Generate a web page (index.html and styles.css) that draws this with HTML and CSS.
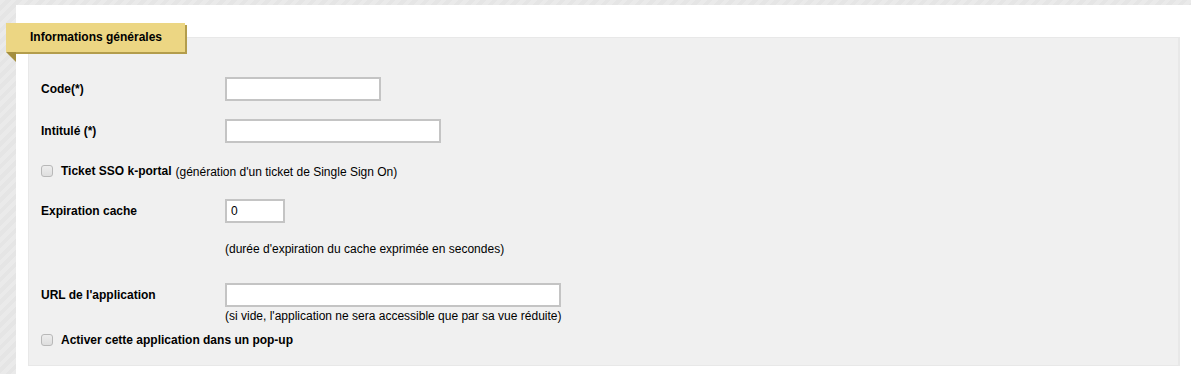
FILE: index.html
```html
<!DOCTYPE html>
<html lang="fr">
<head>
  <meta charset="UTF-8">
  <title>Application</title>
  <link rel="stylesheet" href="styles.css">
</head>
<body>

  <div class="panel">
    <div class="legend">Informations générales</div>

    <div class="fieldset">
      <div class="row row-code">
        <label class="label">Code(*)</label>
        <input type="text" class="field field-code">
      </div>

      <div class="row row-title">
        <label class="label">Intitulé (*)</label>
        <input type="text" class="field field-title">
      </div>

      <div class="check-row row-sso">
        <input type="checkbox" class="check">
        <span class="check-label">Ticket SSO k-portal</span>
        <span class="hint">(génération d'un ticket de Single Sign On)</span>
      </div>

      <div class="row row-cache">
        <label class="label">Expiration cache</label>
        <input type="text" class="field field-cache" value="0">
      </div>
      <div class="note note-cache">(durée d'expiration du cache exprimée en secondes)</div>

      <div class="row row-url">
        <label class="label">URL de l'application</label>
        <input type="text" class="field field-url">
      </div>
      <div class="note note-url">(si vide, l'application ne sera accessible que par sa vue réduite)</div>

      <div class="check-row row-popup">
        <input type="checkbox" class="check">
        <span class="check-label">Activer cette application dans un pop-up</span>
      </div>
    </div>
  </div>

</body>
</html>
```

FILE: styles.css
```css
* {
  box-sizing: border-box;
}

body {
  margin: 0;
  padding: 5px 0 0 16px;
  min-height: 100vh;
  font-family: 'Liberation Sans', Arial, sans-serif;
  font-size: 12px;
  color: #000;
  background: repeating-linear-gradient(135deg, #eaeaea 0, #eaeaea 4px, #e5e5e5 4px, #e5e5e5 8px);
}

.panel {
  position: relative;
  background: #fff;
  padding: 32px 11px 10px 12px;
  min-height: 369px;
}

/* yellow ribbon over the fieldset */
.legend {
  position: absolute;
  left: -10px;
  top: 18px;
  width: 179px;
  height: 29px;
  line-height: 29px;
  padding-left: 24px;
  font-weight: bold;
  background: #ecd683;
  box-shadow: 2px 2px 0 #b39d4c;
  z-index: 1;
}

.legend::after {
  content: "";
  position: absolute;
  left: 0;
  top: 29px;
  border-top: 10px solid #a48e3f;
  border-left: 10px solid transparent;
}

.fieldset {
  background: #f0f0f0;
  border: 1px solid #e8e8e8;
  border-right-width: 2px;
  padding: 39px 0 17px 12px;
}

.row {
  display: flex;
  align-items: center;
}

.label {
  width: 184px;
  font-weight: bold;
}

.field {
  height: 24px;
  border: 2px solid #c4c4c4;
  background: #fff;
  padding: 0 4px;
  font-family: inherit;
  font-size: 12px;
  outline: none;
}

.field-code { width: 156px; }
.field-title { width: 216px; }
.field-cache { width: 60px; }
.field-url { width: 336px; }

.row-title { margin-top: 18px; }

.check-row {
  display: flex;
  align-items: center;
  height: 16px;
}

.check {
  appearance: none;
  -webkit-appearance: none;
  width: 12px;
  height: 12px;
  margin: 0 8px 0 0;
  border: 1px solid #b8b8b8;
  border-radius: 3px;
  background: linear-gradient(#ededed, #dedede);
}

.check-label {
  font-weight: bold;
}

.hint {
  margin-left: 4px;
  position: relative;
  top: 1px;
}

.row-sso { margin-top: 20px; }
.row-cache { margin-top: 20px; }

.note {
  margin-left: 184px;
  line-height: 14px;
}

.note-cache { margin-top: 19px; }
.row-url { margin-top: 27px; }
.note-url { margin-top: 2px; }
.row-popup { margin-top: 9px; }
```
